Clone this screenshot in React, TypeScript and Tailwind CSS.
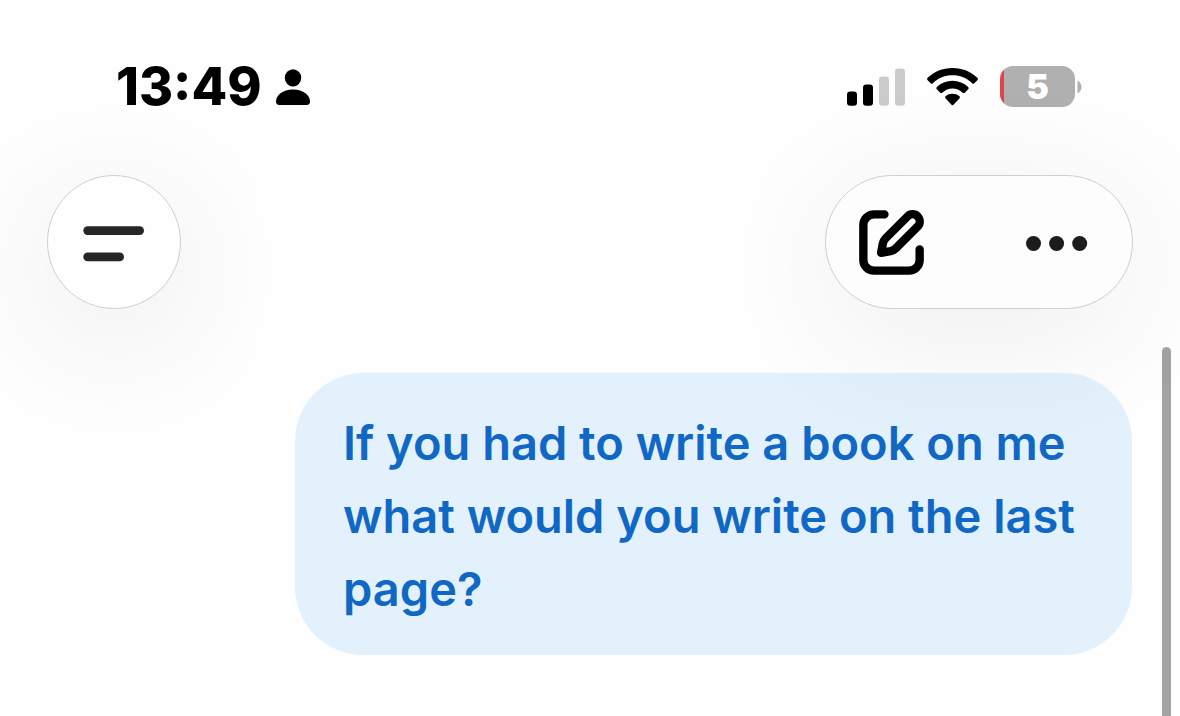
function PersonIcon() {
  return (
    <svg width="34" height="36" viewBox="0 0 34 36" fill="#000" aria-hidden="true">
      <ellipse cx="17" cy="8.8" rx="8.2" ry="8.6" />
      <path d="M3.500 36C1 36 0 34.600 0 32.500C0 26.500 6.500 20.500 17 20.500S34 26.500 34 32.500C34 34.600 33 36 30.500 36Z" />
    </svg>
  );
}

function SignalIcon() {
  return (
    <svg width="58" height="38" viewBox="0 0 58 38" aria-hidden="true">
      <rect x="0" y="23.500" width="10" height="14.200" rx="3.200" fill="#000" />
      <rect x="16" y="16.500" width="10" height="21.200" rx="3.200" fill="#000" />
      <rect x="32" y="8.500" width="10" height="29.200" rx="3.200" fill="#cbcbcb" />
      <rect x="48" y="0.500" width="10" height="37.200" rx="3.200" fill="#cbcbcb" />
    </svg>
  );
}

function WifiIcon() {
  return (
    <svg width="51" height="38" viewBox="0 0 153 114" fill="#000" aria-hidden="true">
      <path d="M76.500 0C106 0 132 11 151 29.500Q154.500 33 151 36.500L142 45.500Q139 48.500 135.500 45.500C119 30 99 22 76.500 22S34 30 17.500 45.500Q14 48.500 11 45.500L2 36.500Q-1.500 33 2 29.500C21 11 47 0 76.500 0Z" />
      <path d="M76.500 38.500C95 38.500 111 45.500 123.500 57Q127 60.500 123.500 64L113.500 74Q110.500 76.500 107 74C98.500 66 88 61.500 76.500 61.500S54.500 66 46 74Q42.500 76.500 39.500 74L29.500 64Q26 60.500 29.500 57C42 45.500 58 38.500 76.500 38.500Z" />
      <path d="M76.500 77.500C84 77.500 91 80 97 84.500Q100.500 87.500 97 91.500L79.500 110.500Q76.500 113.500 73.500 110.500L56 91.500Q52.500 87.500 56 84.500C62 80 69 77.500 76.500 77.500Z" />
    </svg>
  );
}

function Battery({ level }: { level: number }) {
  return (
    <div className="flex items-center gap-0.5" role="img" aria-label={`Battery ${level} percent`}>
      <div className="flex h-[41px] w-[75px] items-center justify-center overflow-hidden rounded-[13px] bg-[linear-gradient(90deg,#e0434b_4px,#b0b0b0_4px)]">
        <span className="font-['Inter',sans-serif] text-[34px] leading-none font-black text-white">
          {level}
        </span>
      </div>
      <svg width="5" height="14" viewBox="0 0 5 14" fill="#b0b0b0" aria-hidden="true">
        <path d="M0.500 0.500C3 2 4.500 4.200 4.500 7S3 12 0.500 13.500Z" />
      </svg>
    </div>
  );
}

function MenuIcon() {
  return (
    <svg width="62" height="40" viewBox="0 0 62 40" fill="#262626" aria-hidden="true">
      <rect x="0.300" y="4.300" width="60.700" height="8.600" rx="4.300" />
      <rect x="0.300" y="30.600" width="40.700" height="8.600" rx="4.300" />
    </svg>
  );
}

function ComposeIcon() {
  return (
    <svg
      width="65"
      height="65"
      viewBox="0 0 194 194"
      fill="none"
      stroke="#000"
      strokeWidth="25"
      strokeLinecap="round"
      strokeLinejoin="round"
      aria-hidden="true"
    >
      <path d="M76 13H45A32 32 0 0 0 13 45V149A32 32 0 0 0 45 181H149A32 32 0 0 0 181 149V118" />
      <path d="M66 128L71 101Q73 91 80 84L145 19A21.200 21.200 0 0 1 175 49L110 114Q103 121 94 123Z" />
    </svg>
  );
}

function DotsIcon() {
  return (
    <svg width="62" height="20" viewBox="0 0 62 20" fill="#1c1c1c" aria-hidden="true">
      <circle cx="7.500" cy="11.500" r="7.500" />
      <circle cx="30.600" cy="11.500" r="7.500" />
      <circle cx="53.700" cy="11.500" r="7.500" />
    </svg>
  );
}

export default function App() {
  return (
    <div className="relative min-h-screen overflow-hidden bg-[#fefefe] font-['Inter',sans-serif]">
      <div className="flex h-[107px] items-end justify-between pr-[98px] pl-[116px]">
        <div className="flex h-[41px] items-center gap-[14px]">
          <time className="text-[52px] leading-none font-extrabold text-black">13:49</time>
          <PersonIcon />
        </div>
        <div className="flex h-[41px] items-center gap-[22px]">
          <SignalIcon />
          <WifiIcon />
          <Battery level={5} />
        </div>
      </div>

      <header className="relative z-10 mt-[68px] flex items-center justify-between px-[47px]">
        <button
          type="button"
          aria-label="Menu"
          className="flex size-[134px] items-center justify-center rounded-full border border-[#cfcfcf] bg-[#fefefe] shadow-[0_28px_140px_rgba(0,0,0,0.09)]"
        >
          <MenuIcon />
        </button>
        <div className="flex h-[134px] w-[308px] items-center justify-between rounded-full border border-[#cfcfcf] bg-[#fdfdfd] pr-[44px] pl-[33px] shadow-[0_24px_140px_rgba(0,0,0,0.07)]">
          <button type="button" aria-label="New chat">
            <ComposeIcon />
          </button>
          <button type="button" aria-label="More options">
            <DotsIcon />
          </button>
        </div>
      </header>

      <main className="mt-16 flex justify-end pr-12 pl-12">
        <p className="max-w-[837px] rounded-[68px] bg-[#e3f1fc] px-12 pt-[33px] pb-[30px] text-[47px] leading-[73px] font-semibold text-[#1068c4]">
          If you had to write a book on me what would you write on the last page?
        </p>
      </main>

      <div className="absolute top-[347px] right-[9px] bottom-0 w-[9px] rounded-t-full bg-[#a3a3a3]" />
    </div>
  );
}
